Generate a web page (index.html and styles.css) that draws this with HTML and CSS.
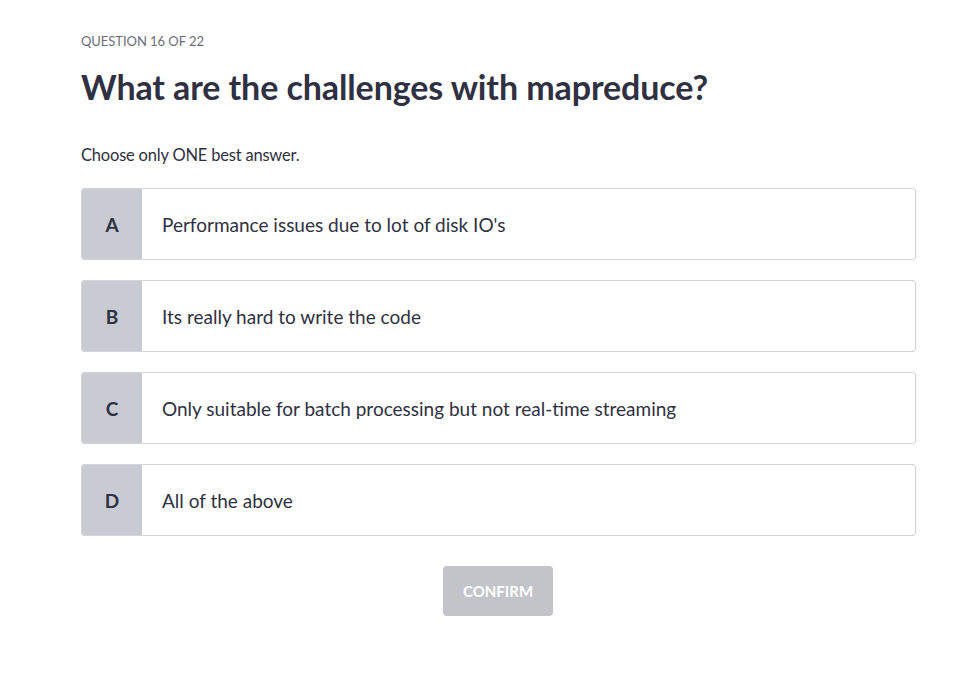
FILE: index.html
```html
<!DOCTYPE html>
<html>
<head>
<meta charset="utf-8">
<link rel="stylesheet" href="styles.css">
</head>
<body>
<main class="quiz">
  <div class="counter">QUESTION 16 OF 22</div>
  <h1 class="title">What are the challenges with mapreduce?</h1>
  <p class="hint">Choose only ONE best answer.</p>
  <div class="options">
    <div class="option"><div class="letter">A</div><div class="text">Performance issues due to lot of disk IO's</div></div>
    <div class="option"><div class="letter">B</div><div class="text">Its really hard to write the code</div></div>
    <div class="option"><div class="letter">C</div><div class="text">Only suitable for batch processing but not real-time streaming</div></div>
    <div class="option"><div class="letter">D</div><div class="text">All of the above</div></div>
  </div>
  <div class="actions"><button class="confirm">CONFIRM</button></div>
</main>
</body>
</html>
```
FILE: styles.css
```css
html, body { margin: 0; padding: 0; background: #fff; }
body { font-family: Lato, "Noto Sans", sans-serif; color: #2f3140; }
.quiz { width: 835px; padding: 33px 0 0 81px; }
.counter { font-size: 13px; color: #6b6e7a; line-height: 16px; letter-spacing: -0.05px; }
.title { margin: 18px 0 0; font-size: 34px; font-weight: 700; line-height: 40px; color: #2f3142; letter-spacing: -0.1px; }
.hint { margin: 38px 0 0; font-size: 16.5px; line-height: 20px; color: #2f3140; letter-spacing: -0.2px; }
.options { margin-top: 23px; display: flex; flex-direction: column; gap: 20px; }
.option { display: flex; height: 70px; border: 1px solid #d2d3db; border-radius: 3px; overflow: hidden; }
.letter { width: 60px; background: #c9cbd3; display: flex; align-items: center; justify-content: center; font-size: 19px; font-weight: 700; color: #2f3142; }
.text { display: flex; align-items: center; padding-left: 20px; font-size: 19px; color: #2f3140; letter-spacing: 0; }
.actions { display: flex; justify-content: center; margin-top: 30px; }
.confirm { width: 110px; height: 50px; border: none; border-radius: 4px; background: #c3c4ca; color: #fff; font-family: Lato, "Noto Sans", sans-serif; font-size: 15px; font-weight: 700; padding: 0; margin-right: 1px; }
```
